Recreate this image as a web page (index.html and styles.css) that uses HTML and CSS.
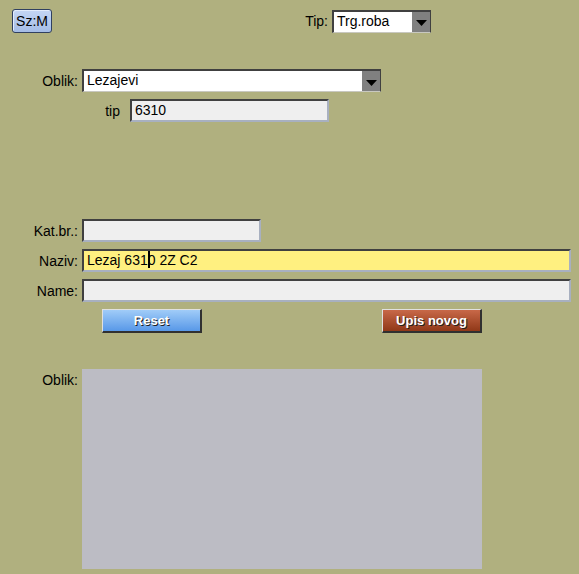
FILE: index.html
```html
<!DOCTYPE html>
<html>
<head>
<meta charset="utf-8">
<link rel="stylesheet" href="styles.css">
</head>
<body>
<div class="page">
  <div class="row top">
    <button class="size-btn">Sz:M</button>
    <span class="lbl tip-lbl">Tip:</span>
    <div class="select sel-tip">
      <span class="sel-text">Trg.roba</span>
      <span class="arrow"><svg width="11" height="7" viewBox="0 0 11 7"><polygon points="0,0 11,0 5.5,6" fill="#000"/></svg></span>
    </div>
  </div>

  <div class="row oblik">
    <span class="lbl w82">Oblik:</span>
    <div class="select sel-oblik">
      <span class="sel-text">Lezajevi</span>
      <span class="arrow"><svg width="11" height="7" viewBox="0 0 11 7"><polygon points="0,0 11,0 5.5,6" fill="#000"/></svg></span>
    </div>
  </div>

  <div class="row tiprow">
    <span class="lbl w130">tip</span>
    <div class="field f-tip">6310</div>
  </div>

  <div class="form">
    <div class="row">
      <span class="lbl w82">Kat.br.:</span>
      <div class="field f-kat"></div>
    </div>
    <div class="row">
      <span class="lbl w82">Naziv:</span>
      <div class="field f-wide yellow">Lezaj 631<span class="caret"></span>0 2Z C2</div>
    </div>
    <div class="row">
      <span class="lbl w82">Name:</span>
      <div class="field f-wide"></div>
    </div>
    <div class="row buttons">
      <button class="act blue">Reset</button>
      <button class="act brown">Upis novog</button>
    </div>
  </div>

  <div class="row image-row">
    <span class="lbl w82 top-lbl">Oblik:</span>
    <div class="image-box"></div>
  </div>
</div>
</body>
</html>
```

FILE: styles.css
```css
html, body {
  margin: 0;
  padding: 0;
  background: #b0b07f;
}
body {
  font-family: "Liberation Sans", Arial, sans-serif;
  font-size: 14px;
  color: #000;
}
.page {
  width: 579px;
  height: 574px;
  overflow: hidden;
}
.row {
  display: flex;
  align-items: center;
}
.lbl {
  box-sizing: border-box;
  text-align: right;
  white-space: nowrap;
}
.w82 { width: 82px; padding-right: 4px; }
.w130 { width: 130px; padding-right: 10px; }

.top {
  padding: 9px 0 0 12px;
  height: 24px;
}
.size-btn {
  box-sizing: border-box;
  width: 40px;
  height: 24px;
  padding: 0;
  border: 1px solid #304060;
  border-radius: 3px;
  background: linear-gradient(#c4d6f4, #a4bce6);
  font-family: "Liberation Sans", Arial, sans-serif;
  font-size: 14px;
  color: #000;
  box-shadow: inset 1px 1px 0 #e2ecfc;
}
.tip-lbl {
  width: 280px;
  padding-right: 4px;
}
.select {
  box-sizing: border-box;
  display: flex;
  height: 23px;
  background: #fff;
  border-top: 2px solid #404040;
  border-left: 2px solid #404040;
  border-right: 1px solid #404040;
  border-bottom: 1px solid #c8c8c0;
}
.sel-tip { width: 99px; }
.sel-oblik { width: 299px; }
.sel-text {
  flex: 1;
  padding-left: 3px;
  line-height: 19px;
}
.arrow {
  width: 18px;
  background: #808080;
  display: flex;
  align-items: center;
  justify-content: center;
  padding-top: 4px;
  box-sizing: border-box;
}
.oblik {
  margin-top: 36px;
}
.tiprow {
  margin-top: 7px;
}
.field {
  box-sizing: border-box;
  height: 23px;
  background: #efefef;
  border-top: 2px solid #404040;
  border-left: 2px solid #404040;
  border-right: 2px solid #a8b0c0;
  border-bottom: 2px solid #a8b0c0;
  padding-left: 3px;
  line-height: 19px;
  white-space: nowrap;
}
.f-tip { width: 199px; }
.f-kat { width: 179px; }
.f-wide { width: 489px; }
.yellow { background: #fff080; }
.caret {
  display: inline-block;
  width: 2px;
  height: 17px;
  background: #000;
  vertical-align: -3px;
  margin-right: -2px;
}
.form {
  margin-top: 97px;
  display: flex;
  flex-direction: column;
  gap: 7px;
}
.buttons {
  padding-left: 102px;
  gap: 180px;
}
.act {
  box-sizing: border-box;
  width: 100px;
  height: 24px;
  padding: 0;
  font-family: "Liberation Sans", Arial, sans-serif;
  font-weight: bold;
  font-size: 13px;
  color: #fff;
  text-shadow: 1px 1px 0 #202020;
  border-top: 1px solid #e0e0e0;
  border-left: 1px solid #e0e0e0;
  border-right: 2px solid #303030;
  border-bottom: 2px solid #303030;
}
.blue { background: linear-gradient(#a0ccf8, #5898e8); }
.brown { background: linear-gradient(#c86848, #903818); }
.image-row {
  margin-top: 36px;
  align-items: flex-start;
}
.top-lbl {
  padding-top: 3px;
}
.image-box {
  width: 400px;
  height: 200px;
  background: #bcbcc4;
}
```
